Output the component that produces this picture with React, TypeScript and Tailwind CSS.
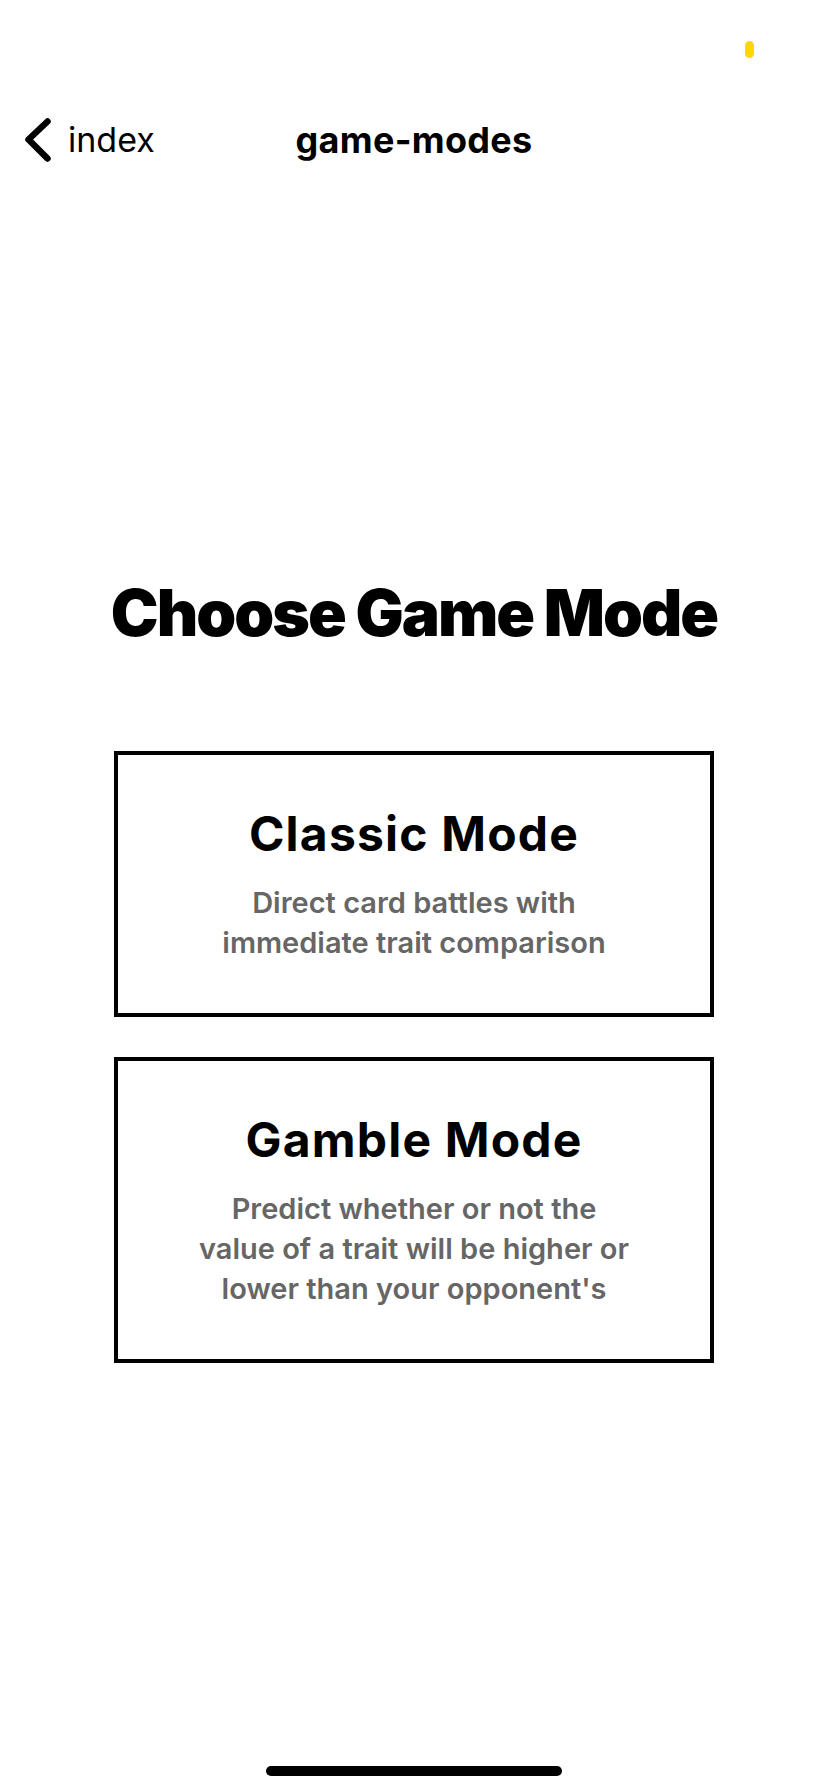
import { memo } from "react";

const modes = [
  {
    title: "Classic Mode",
    description: "Direct card battles with immediate trait comparison",
  },
  {
    title: "Gamble Mode",
    description:
      "Predict whether or not the value of a trait will be higher or lower than your opponent's",
  },
];

const BackChevron = () => (
  <svg width="28" height="44" viewBox="0 0 28 44" fill="none">
    <polyline
      points="23.5,3.5 4.5,21.5 23.5,40.5"
      stroke="#000"
      strokeWidth="6.5"
      strokeLinecap="round"
      strokeLinejoin="round"
    />
  </svg>
);

const ModeCard = ({ title, description }: { title: string; description: string }) => (
  <button className="flex w-[600px] flex-col items-center border-4 border-black bg-white px-[78px] py-[50px] text-center">
    <span className="text-[48px] font-bold leading-[57px] tracking-[1.2px] text-black">
      {title}
    </span>
    <span className="mt-[21px] text-[29px] font-semibold leading-[40px] text-[#666666]">
      {description}
    </span>
  </button>
);

const App = () => {
  return (
    <div className="flex min-h-[1792px] w-[828px] flex-col bg-white font-['Inter','Noto_Sans',sans-serif]">
      {/* status bar */}
      <div className="flex h-[96px] justify-end pr-[74px] pt-[41px]">
        <div className="h-[17px] w-[9px] rounded-full bg-[#ffd60a]" />
      </div>

      {/* nav bar */}
      <div className="grid h-[88px] grid-cols-[1fr_auto_1fr] items-center">
        <div className="flex items-center gap-[16px] pl-[24px]">
          <BackChevron />
          <span className="text-[34px] leading-none text-black">index</span>
        </div>
        <h1 className="text-[36px] font-bold leading-none tracking-[0.3px] text-black">
          game-modes
        </h1>
        <div />
      </div>

      {/* content */}
      <main className="flex flex-1 flex-col items-center pt-[390px]">
        <h2 className="text-[64px] font-black leading-[77px] tracking-[-2px] text-black">
          Choose Game Mode
        </h2>
        <div className="mt-[100px] flex flex-col gap-[40px]">
          {modes.map((mode) => (
            <ModeCard key={mode.title} {...mode} />
          ))}
        </div>
      </main>

      {/* home indicator */}
      <div className="flex h-[26px] justify-center">
        <div className="h-[10px] w-[296px] rounded-full bg-black" />
      </div>
    </div>
  );
};

export default memo(App);
